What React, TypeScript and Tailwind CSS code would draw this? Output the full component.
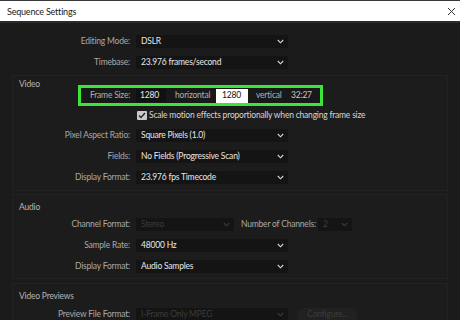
import { ReactNode } from 'react';

// small chevron for dropdowns
function Chevron({ faint }: { faint?: boolean }) {
  return (
    <svg width="7" height="5" viewBox="0 0 7 5" className={faint ? 'text-[#3a3a3a]' : 'text-[#d8d8d8]'}>
      <path d="M0.8 1 L3.5 3.8 L6.2 1" fill="none" stroke="currentColor" strokeWidth="1.1" />
    </svg>
  );
}

function Select({ value, width = 'w-[152px]', faint }: { value: string; width?: string; faint?: boolean }) {
  return (
    <div className={`${width} h-[13px] shrink-0 bg-[#141414] flex items-center justify-between pl-[5px] pr-[4px]`}>
      <span className={`whitespace-nowrap ${faint ? 'text-[#3c3c3c]' : 'text-[#e8e8e8]'}`}>{value}</span>
      <Chevron faint={faint} />
    </div>
  );
}

// label column ends at x=130 on the page
function Row({ label, inPanel, children }: { label: string; inPanel?: boolean; children: ReactNode }) {
  return (
    <div className="h-[21px] flex items-center">
      <div className={`${inPanel ? 'w-[117px]' : 'w-[130px]'} shrink-0 text-right text-[#a9a9a9] whitespace-nowrap`}>{label}</div>
      <div className="ml-[6px] flex items-center">{children}</div>
    </div>
  );
}

function Heading({ children }: { children: ReactNode }) {
  return <div className="pl-[6px] h-[9px] text-[#b5b5b5] whitespace-nowrap">{children}</div>;
}

export default function App() {
  return (
    <div
      className="w-[460px] h-[320px] overflow-hidden bg-[#1b1b1b] text-[8.5px] leading-[9px] tracking-[-0.2px]"
      style={{ fontFamily: 'Lato, "Open Sans", sans-serif' }}
    >
      {/* Title bar */}
      <div className="h-[23px] bg-white border-t border-[#3a3a3a] border-b-2 border-b-[#2a2a2a] flex items-center justify-between pl-[7px] pr-[4px]">
        <span className="text-[9px] tracking-[-0.2px] text-[#1a1a1a]">Sequence Settings</span>
        <svg width="9" height="9" viewBox="0 0 9 9" className="text-[#333]">
          <path d="M1 1 L8 8 M8 1 L1 8" stroke="currentColor" strokeWidth="1" />
        </svg>
      </div>

      {/* Top rows */}
      <div className="pt-[8px]">
        <Row label="Editing Mode:">
          <Select value="DSLR" />
        </Row>
        <Row label="Timebase:">
          <Select value="23.976  frames/second" />
        </Row>
      </div>

      {/* Video */}
      <div className="mt-[2px] mx-[12px] border border-[#222] bg-[#1c1c1c] pt-[4px] pb-[2px]">
        <div className="flex items-start">
          <div className="w-[65px] shrink-0"><Heading>Video</Heading></div>
          <div className="mt-[5px] border-[3px] border-[#3de43a] bg-[#181818] h-[21px] w-[245px] flex items-center pl-[9px]">
            <span className="w-[46px] shrink-0 text-[#b0b0b0] whitespace-nowrap">Frame Size:</span>
            <div className="w-[30px] h-[13px] shrink-0 bg-[#111] flex items-center pl-[4px] text-[#e8e8e8]">1280</div>
            <span className="ml-[9px] w-[41px] shrink-0 text-[#b0b0b0]">horizontal</span>
            <div className="w-[32px] h-[14px] shrink-0 bg-white flex items-center pl-[6px] text-[#111]">1280</div>
            <span className="ml-[8px] w-[35px] shrink-0 text-[#b0b0b0]">vertical</span>
            <span className="text-[#c8c8c8]">32:27</span>
          </div>
        </div>
        <div className="h-[19px] flex items-center pl-[124px]">
          <div className="w-[10px] h-[9px] shrink-0 bg-[#c9c9c9] rounded-[1px] flex items-center justify-center">
            <svg width="8" height="7" viewBox="0 0 8 7">
              <path d="M1 3.5 L3 5.5 L7 1" fill="none" stroke="#222" strokeWidth="1.3" />
            </svg>
          </div>
          <span className="ml-[2px] text-[#d6d6d6] whitespace-nowrap">Scale motion effects proportionally when changing frame size</span>
        </div>
        <Row label="Pixel Aspect Ratio:" inPanel>
          <Select value="Square Pixels (1.0)" />
        </Row>
        <Row label="Fields:" inPanel>
          <Select value="No Fields (Progressive Scan)" />
        </Row>
        <Row label="Display Format:" inPanel>
          <Select value="23.976 fps Timecode" />
        </Row>
      </div>

      {/* Audio */}
      <div className="mt-[3px] mx-[12px] border border-[#222] bg-[#1c1c1c] pt-[8px] pb-[1px]">
        <Heading>Audio</Heading>
        <div className="mt-[2px]">
          <Row label="Channel Format:" inPanel>
            <Select value="Stereo" width="w-[98px]" faint />
            <span className="ml-[7px] w-[77px] shrink-0 text-[#a9a9a9] whitespace-nowrap">Number of Channels:</span>
            <Select value="2" width="w-[34px]" faint />
          </Row>
          <Row label="Sample Rate:" inPanel>
            <Select value="48000 Hz" />
          </Row>
          <Row label="Display Format:" inPanel>
            <Select value="Audio Samples" />
          </Row>
        </div>
      </div>

      {/* Video Previews */}
      <div className="mt-[4px] mx-[12px] border border-[#222] bg-[#1c1c1c] pt-[8px]">
        <Heading>Video Previews</Heading>
        <div className="mt-[3px]">
          <Row label="Preview File Format:" inPanel>
            <Select value="I-Frame Only MPEG" faint />
            <div className="ml-[9px] w-[61px] h-[14px] shrink-0 rounded-full bg-[#212121] flex items-center justify-center text-[#3c3c3c]">Configure...</div>
          </Row>
        </div>
      </div>
    </div>
  );
}
